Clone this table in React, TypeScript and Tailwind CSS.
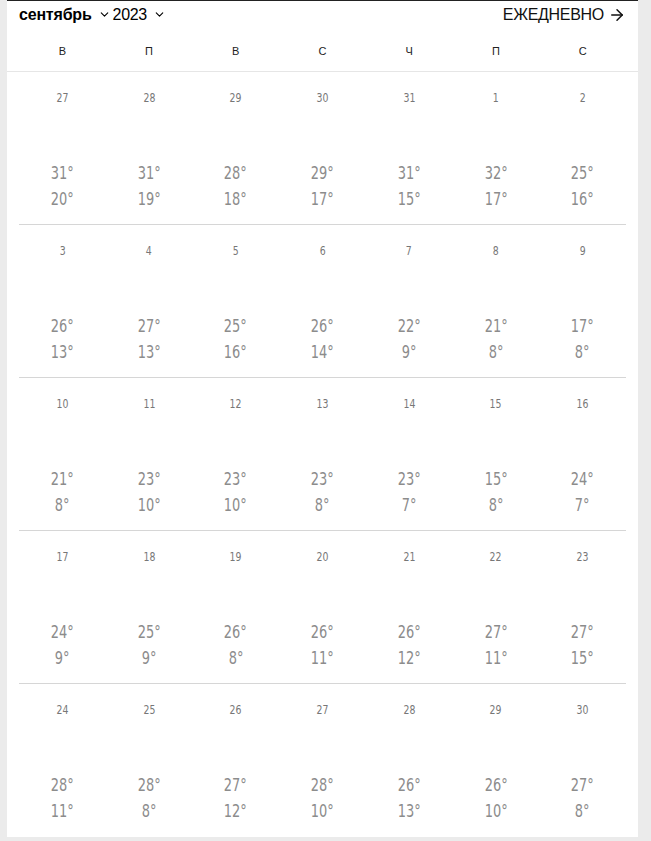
import { ChevronDown, ArrowRight } from "lucide-react";

const DAYS = ["в", "п", "в", "с", "ч", "п", "с"];

const WEEKS: [number, number, number][][] = [
    [[27, 31, 20], [28, 31, 19], [29, 28, 18], [30, 29, 17], [31, 31, 15], [1, 32, 17], [2, 25, 16]],
    [[3, 26, 13], [4, 27, 13], [5, 25, 16], [6, 26, 14], [7, 22, 9], [8, 21, 8], [9, 17, 8]],
    [[10, 21, 8], [11, 23, 10], [12, 23, 10], [13, 23, 8], [14, 23, 7], [15, 15, 8], [16, 24, 7]],
    [[17, 24, 9], [18, 25, 9], [19, 26, 8], [20, 26, 11], [21, 26, 12], [22, 27, 11], [23, 27, 15]],
    [[24, 28, 11], [25, 28, 8], [26, 27, 12], [27, 28, 10], [28, 26, 13], [29, 26, 10], [30, 27, 8]],
];

export default function App() {
    return (
        <div className="min-h-[841px] bg-[#ebebeb] pl-[7px] pr-[13px] pb-[5px]">
            <div className="bg-white border-t border-[#222] font-['Liberation_Sans',Arial,sans-serif]">
                {/* header */}
                <div className="flex items-center justify-between h-[26px] pl-[12px] pr-[12px] pt-[1px]">
                    <div className="flex items-center text-[16px] text-black">
                        <span className="font-bold tracking-[-0.2px]">сентябрь</span>
                        <ChevronDown className="w-[13px] h-[13px] ml-[6px] mr-[2px]" strokeWidth={2} />
                        <span className="tracking-[-0.3px]">2023</span>
                        <ChevronDown className="w-[13px] h-[13px] ml-[6px]" strokeWidth={2} />
                    </div>
                    <div className="flex items-center text-[16px] text-[#111] tracking-[-0.3px]">
                        <span>ЕЖЕДНЕВНО</span>
                        <ArrowRight className="w-[18px] h-[18px] ml-[4px]" strokeWidth={2} />
                    </div>
                </div>

                {/* weekday row */}
                <div className="border-b border-[#e6e6e6]">
                    <div className="grid grid-cols-7 mx-[12px] h-[44px] items-center pt-[5px] text-[11px] uppercase text-[#222]">
                        {DAYS.map((d, i) => (
                            <div key={i} className="text-center">{d}</div>
                        ))}
                    </div>
                </div>

                {/* weeks */}
                <div className="mx-[12px] font-['Liberation_Sans_Narrow','DejaVu_Sans_Condensed','Roboto_Condensed',sans-serif] text-[#8c8c8c]">
                    {WEEKS.map((week, w) => (
                        <div
                            key={w}
                            className={`grid grid-cols-7 h-[153px] ${w < WEEKS.length - 1 ? "border-b border-[#d6d6d6]" : ""}`}
                        >
                            {week.map(([day, hi, lo]) => (
                                <div key={day} className="flex flex-col items-center">
                                    <div className="mt-[16px] text-[13px] text-[#777] scale-x-[0.8]">{day}</div>
                                    <div className="mt-[52px] text-[18px] leading-[26px] scale-x-[0.8]">{hi}°</div>
                                    <div className="text-[18px] leading-[26px] scale-x-[0.8]">{lo}°</div>
                                </div>
                            ))}
                        </div>
                    ))}
                </div>
            </div>
        </div>
    );
}
